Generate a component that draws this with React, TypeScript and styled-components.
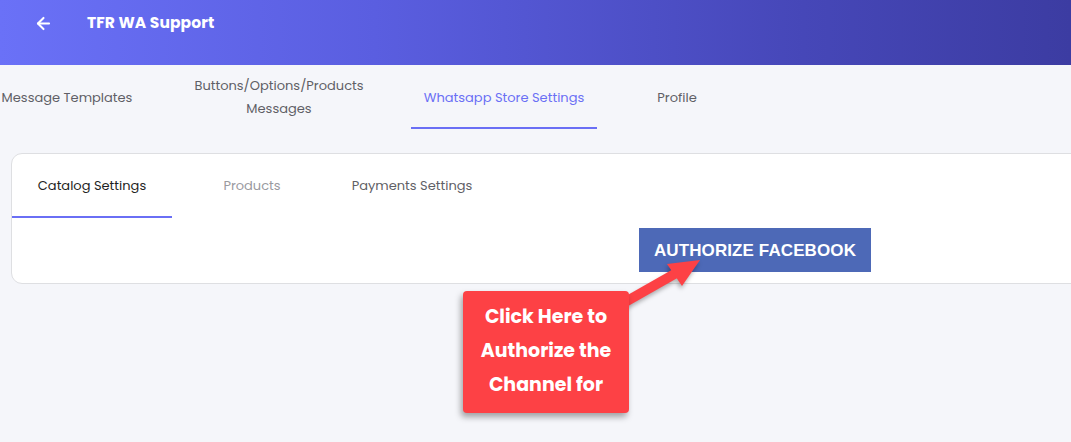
import React from "react"
import styled, { createGlobalStyle } from "styled-components"
import { ArrowLeft } from "lucide-react"

const Global = createGlobalStyle`
  html, body {
    margin: 0;
    padding: 0;
    overflow: hidden;
    background: #f5f6fa;
    font-family: "Poppins", "Open Sans", "DejaVu Sans", sans-serif;
  }
`

const Page = styled.div`
  position: relative;
  width: 1071px;
  height: 442px;
  overflow: hidden;
  background: #f5f6fa;
`

const Header = styled.header`
  height: 65px;
  box-sizing: border-box;
  padding: 12px 0 0 32px;
  display: flex;
  align-items: flex-start;
  background: linear-gradient(90deg, #6a71f7 0%, #5a5ee0 35%, #4647b8 75%, #3c3ca2 100%);
  color: #fff;
`

const BackButton = styled.button`
  width: 22px;
  height: 22px;
  padding: 0;
  border: none;
  background: transparent;
  color: #fff;
  display: flex;
  align-items: center;
  justify-content: center;
  cursor: pointer;
`

const Title = styled.h1`
  margin: 0 0 0 33px;
  font-size: 15.5px;
  font-weight: 700;
  line-height: 22px;
  letter-spacing: 0.1px;
`

const TabBar = styled.nav`
  height: 65px;
  display: flex;
  margin-left: -13px;
`

const Tab = styled.div<{ $width: number; $active?: boolean }>`
  width: ${p => p.$width}px;
  flex: none;
  display: flex;
  align-items: center;
  justify-content: center;
  text-align: center;
  box-sizing: border-box;
  font-size: 13px;
  line-height: 23px;
  padding-top: 2px;
  color: ${p => (p.$active ? "#6a6ff5" : "#5f5f66")};
  border-bottom: 2px solid ${p => (p.$active ? "#6a6ff5" : "transparent")};
  height: 64px;
`

const Card = styled.section`
  margin: 23px 0 0 11px;
  width: 1486px;
  background: #fff;
  border: 1px solid #dedfe2;
  border-radius: 11px;
  overflow: hidden;
`

const SubTabs = styled.div`
  display: flex;
  height: 64px;
`

const SubTab = styled.div<{ $tone: string; $active?: boolean }>`
  width: 160px;
  display: flex;
  align-items: center;
  justify-content: center;
  box-sizing: border-box;
  padding-top: 2px;
  font-size: 13px;
  color: ${p => p.$tone};
  border-bottom: 2px solid ${p => (p.$active ? "#6a6ff5" : "transparent")};
`

const CardContent = styled.div`
  display: flex;
  justify-content: center;
  padding: 10px 0 11px;
`

const AuthButton = styled.button`
  width: 232px;
  height: 44px;
  padding-top: 2px;
  border: none;
  border-radius: 0;
  background: #4d69b7;
  color: #fff;
  font-family: "Liberation Sans", Arial, sans-serif;
  font-weight: 700;
  font-size: 17px;
  letter-spacing: 0.1px;
  cursor: pointer;
`

const Callout = styled.div`
  position: absolute;
  left: 463px;
  top: 291px;
  width: 166px;
  height: 122px;
  box-sizing: border-box;
  padding-top: 9px;
  background: #fd4145;
  border-radius: 4px;
  box-shadow: -2px 4px 6px rgba(0, 0, 0, 0.35);
  color: #fff;
  font-weight: 700;
  font-size: 19px;
  line-height: 34px;
  text-align: center;
`

const Pointer = styled.svg`
  position: absolute;
  left: 620px;
  top: 250px;
  overflow: visible;
  filter: drop-shadow(-1px 3px 2px rgba(0, 0, 0, 0.3));
`

const outerTabs = [
  { label: "Message Templates", width: 160 },
  { label: "Buttons/Options/Products\nMessages", width: 264 },
  { label: "Whatsapp Store Settings", width: 186, active: true },
  { label: "Profile", width: 160 }
]

const innerTabs = [
  { label: "Catalog Settings", tone: "#1f1f24", active: true },
  { label: "Products", tone: "#9a9a9f" },
  { label: "Payments Settings", tone: "#5f5f66" }
]

export default function App() {
  return (
    <Page>
      <Global />
      <Header>
        <BackButton aria-label="Back">
          <ArrowLeft size={19} strokeWidth={2.6} />
        </BackButton>
        <Title>TFR WA Support</Title>
      </Header>
      <TabBar>
        {outerTabs.map(t => (
          <Tab key={t.label} $width={t.width} $active={t.active}>
            <span>
              {t.label.split("\n").map((line, i) => (
                <React.Fragment key={i}>
                  {i > 0 && <br />}
                  {line}
                </React.Fragment>
              ))}
            </span>
          </Tab>
        ))}
      </TabBar>
      <Card>
        <SubTabs>
          {innerTabs.map(t => (
            <SubTab key={t.label} $tone={t.tone} $active={t.active}>
              {t.label}
            </SubTab>
          ))}
        </SubTabs>
        <CardContent>
          <AuthButton>AUTHORIZE FACEBOOK</AuthButton>
        </CardContent>
      </Card>
      <Pointer width="90" height="80" viewBox="0 0 90 80">
        <line x1="0" y1="55" x2="58" y2="22" stroke="#fd4145" strokeWidth="10" />
        <polygon points="80,10 47,14 62,36" fill="#fd4145" />
      </Pointer>
      <Callout>
        Click Here to
        <br />
        Authorize the
        <br />
        Channel for
      </Callout>
    </Page>
  )
}
